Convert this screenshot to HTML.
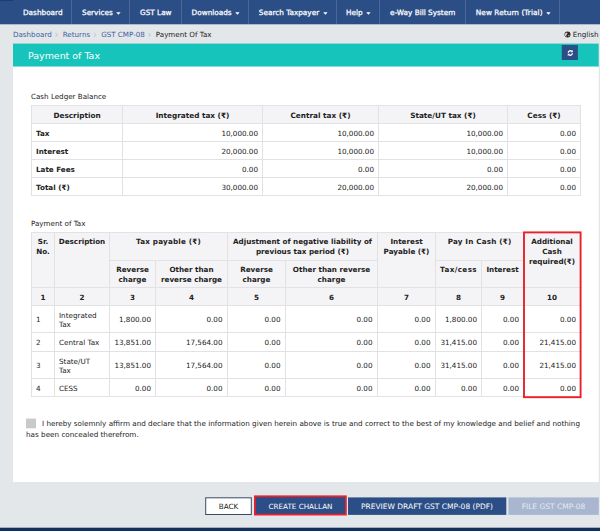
<!DOCTYPE html>
<html lang="en">
<head>
<meta charset="utf-8">
<title>Payment of Tax</title>
<style>
*{box-sizing:border-box;margin:0;padding:0}
html,body{width:602px;height:531px;overflow:hidden;background:#fff}
body{position:relative;font-family:"DejaVu Sans","Liberation Sans",sans-serif;font-size:7.2px;color:#222;line-height:1.2}
#bg{position:absolute;left:0;top:0}
#nav{position:absolute;left:0;top:0;width:600px;height:24px}
#nav .it{position:absolute;top:0;height:24px;line-height:26px;color:#fff;font-size:7.3px;font-weight:normal;white-space:nowrap;-webkit-text-stroke:0.25px #fff}
#nav .dv{position:absolute;top:0;width:1px;height:24px;background:#4a6798}
.caret{display:inline-block;vertical-align:middle;margin-left:3.6px;position:relative;top:0.3px}
#crumb{position:absolute;left:13px;top:24px;height:20px;line-height:22.5px;white-space:nowrap;font-size:7.15px}
#crumb a{color:#3a5f9e;text-decoration:none}
#crumb .sep{color:#bcc2c9;padding:0 4.2px 0 2.8px;font-size:10px;line-height:10px;position:relative;top:0.8px}
#lang{position:absolute;right:3.5px;top:24px;height:20px;line-height:22.5px;font-size:7.15px;white-space:nowrap}
#teal{position:absolute;left:13px;top:44px;width:586px;height:23px}
#teal h1{position:absolute;left:15px;top:0;line-height:23px;font-size:9.45px;font-weight:normal;color:#fff}
#refresh{position:absolute;left:549px;top:1px;width:16px;height:15px}
.lbl{position:absolute;left:31px;font-size:7.15px;white-space:nowrap}
table{position:absolute;left:31px;border-collapse:collapse;table-layout:fixed;font-size:7.2px}
td,th{border:1px solid #e2e2e4;padding:0 4px;vertical-align:middle;overflow:hidden}
th{background:#f4f4f6;font-weight:bold;text-align:center}
td.r{text-align:right;padding-right:5px}
td.b{font-weight:bold}
#t1{top:105px;width:549px}
#t1 tr{height:18px}
#t1 td,#t1 th{padding-top:3px}
#t1 td.r{padding-right:4px}
#t1 th{font-size:7.3px}
#t2{top:232px;width:549px}
#t2 th{vertical-align:top;padding:4.2px 2px 0 2px;line-height:9.7px}
#t2 tr.h2 th{padding-top:3.9px}
#t2 tr.h3 th{padding-top:4.7px}
#t2 td{line-height:9.5px;padding-top:1.4px}
#t2 tr.two td:nth-child(2){padding-top:2.8px}
#t2 tr.last td{padding-top:2.6px}
#t2 td.r{padding-right:4.5px}
#t2 td.r:nth-child(n+8){padding-right:4px}
#t2 td.r:nth-child(3){padding-right:4px}
#red{position:absolute;left:0;top:0;pointer-events:none}
#decl{position:absolute;left:26px;top:417.6px;width:565px;line-height:11px;font-size:7.23px;text-indent:16px}
.btn{position:absolute;top:497px;height:18px;line-height:19px;text-align:center;font-size:7.5px;color:#fff;white-space:nowrap}
</style>
</head>
<body>
<svg id="bg" width="602" height="531" viewBox="0 0 602 531">
  <rect x="0" y="0" width="600" height="531" fill="#e4e7ea"/>
  <rect x="0" y="0" width="600" height="24.3" fill="#2c4e86"/>
  <rect x="0" y="0" width="13" height="0.7" fill="#1c3565"/>
  <rect x="13" y="43.6" width="585.7" height="23.1" fill="#17c4bb"/>
  <rect x="13" y="66.7" width="585.7" height="415.3" fill="#ffffff"/>
  <rect x="561.8" y="45" width="16.1" height="15" fill="#2c4e86"/>
  <rect x="26" y="418.6" width="10" height="9.7" fill="#c9c9c9"/>
  <rect x="0" y="527.7" width="600" height="3.3" fill="#14315d"/>
  <rect x="205.7" y="497.8" width="45.6" height="16.7" fill="#ffffff" stroke="#3a4a66" stroke-width="1"/>
  <rect x="255" y="496.6" width="90.8" height="17.8" fill="#2c4e86"/>
  <rect x="254.9" y="496.3" width="91" height="18.3" fill="none" stroke="#e8212a" stroke-width="1.8"/>
  <rect x="348" y="497.4" width="158.3" height="17.5" fill="#2c4e86"/>
  <rect x="508.4" y="497.4" width="90.4" height="17.5" fill="#a9b6cf"/>
</svg>
<div id="nav">
  <div class="it" style="left:23px">Dashboard</div><div class="dv" style="left:71px"></div>
  <div class="it" style="left:82px">Services<svg class="caret" width="5" height="3" viewBox="0 0 5 3"><polygon points="0.2,0.3 4.6,0.3 2.4,2.7" fill="#fff"/></svg></div><div class="dv" style="left:129px"></div>
  <div class="it" style="left:140px">GST Law</div><div class="dv" style="left:181px"></div>
  <div class="it" style="left:191.6px">Downloads<svg class="caret" width="5" height="3" viewBox="0 0 5 3"><polygon points="0.2,0.3 4.6,0.3 2.4,2.7" fill="#fff"/></svg></div><div class="dv" style="left:248px"></div>
  <div class="it" style="left:258.8px">Search Taxpayer<svg class="caret" width="5" height="3" viewBox="0 0 5 3"><polygon points="0.2,0.3 4.6,0.3 2.4,2.7" fill="#fff"/></svg></div><div class="dv" style="left:336px"></div>
  <div class="it" style="left:346px">Help<svg class="caret" width="5" height="3" viewBox="0 0 5 3"><polygon points="0.2,0.3 4.6,0.3 2.4,2.7" fill="#fff"/></svg></div><div class="dv" style="left:379px"></div>
  <div class="it" style="left:390px">e-Way Bill System</div><div class="dv" style="left:465px"></div>
  <div class="it" style="left:475.8px;letter-spacing:0.08px">New Return (Trial)<svg class="caret" width="5" height="3" viewBox="0 0 5 3"><polygon points="0.2,0.3 4.6,0.3 2.4,2.7" fill="#fff"/></svg></div><div class="dv" style="left:559px"></div>
</div>
<div id="crumb"><a>Dashboard</a><span class="sep">›</span><a>Returns</a><span class="sep">›</span><a>GST CMP-08</a><span class="sep">›</span><span>Payment Of Tax</span></div>
<div id="lang"><svg width="7" height="7" viewBox="0 0 10 10" style="vertical-align:-1px;margin-right:2px"><circle cx="5" cy="5" r="4.3" fill="#262626"/><path d="M1.4 4 L3.4 2.2 L5 2.8 L4.6 4.8 L3.2 5.8 L3.8 8.4 L2.2 7.4 L1 5.6 Z M6.2 5.8 L7.9 5.3 L7.5 7.3 L6.4 7.7 Z" fill="#d9d2c4"/></svg>English</div>
<div id="teal"><h1>Payment of Tax</h1>
  <div id="refresh"><svg width="16" height="15" viewBox="0 0 16 15"><g transform="translate(8.3 8) scale(0.88) translate(-8 -7.9)"><path d="M5.7 7.6a2.3 2.3 0 0 1 4-1.5" fill="none" stroke="#fff" stroke-width="1.5"/><path d="M10.3 8.2a2.3 2.3 0 0 1-4 1.5" fill="none" stroke="#fff" stroke-width="1.5"/><path d="M10.9 4.6v2.5h-2.5z M5.1 11.2v-2.5h2.5z" fill="#fff"/></g></svg></div>
</div>

<div class="lbl" style="top:93px">Cash Ledger Balance</div>
<table id="t1">
<colgroup><col style="width:91px"><col style="width:140px"><col style="width:116px"><col style="width:129px"><col style="width:73px"></colgroup>
<tr><th>Description</th><th>Integrated tax (₹)</th><th>Central tax (₹)</th><th>State/UT tax (₹)</th><th>Cess (₹)</th></tr>
<tr><td class="b">Tax</td><td class="r">10,000.00</td><td class="r">10,000.00</td><td class="r">10,000.00</td><td class="r">0.00</td></tr>
<tr><td class="b">Interest</td><td class="r">20,000.00</td><td class="r">10,000.00</td><td class="r">10,000.00</td><td class="r">0.00</td></tr>
<tr><td class="b">Late Fees</td><td class="r">0.00</td><td class="r">0.00</td><td class="r">0.00</td><td class="r">0.00</td></tr>
<tr><td class="b">Total (₹)</td><td class="r">30,000.00</td><td class="r">20,000.00</td><td class="r">20,000.00</td><td class="r">0.00</td></tr>
</table>

<div class="lbl" style="top:220px">Payment of Tax</div>
<table id="t2">
<colgroup><col style="width:23px"><col style="width:55px"><col style="width:46px"><col style="width:72px"><col style="width:58px"><col style="width:92px"><col style="width:58px"><col style="width:46px"><col style="width:42px"><col style="width:57px"></colgroup>
<tr style="height:28px"><th rowspan="2">Sr. No.</th><th rowspan="2">Description</th><th colspan="2" style="letter-spacing:0.2px">Tax payable (₹)</th><th colspan="2">Adjustment of negative liability of previous tax period (₹)</th><th rowspan="2">Interest Payable (₹)</th><th colspan="2" style="letter-spacing:0.2px">Pay In Cash (₹)</th><th rowspan="2">Additional Cash required(₹)</th></tr>
<tr class="h2" style="height:27px"><th>Reverse charge</th><th>Other than reverse charge</th><th>Reverse charge</th><th>Other than reverse charge</th><th style="letter-spacing:0.4px">Tax/cess</th><th>Interest</th></tr>
<tr class="h3" style="height:18px"><th>1</th><th>2</th><th>3</th><th>4</th><th>5</th><th>6</th><th>7</th><th>8</th><th>9</th><th>10</th></tr>
<tr class="two" style="height:27px"><td>1</td><td>Integrated<br>Tax</td><td class="r">1,800.00</td><td class="r">0.00</td><td class="r">0.00</td><td class="r">0.00</td><td class="r">0.00</td><td class="r">1,800.00</td><td class="r">0.00</td><td class="r">0.00</td></tr>
<tr style="height:19px"><td>2</td><td>Central Tax</td><td class="r">13,851.00</td><td class="r">17,564.00</td><td class="r">0.00</td><td class="r">0.00</td><td class="r">0.00</td><td class="r">31,415.00</td><td class="r">0.00</td><td class="r">21,415.00</td></tr>
<tr class="two" style="height:27px"><td>3</td><td>State/UT<br>Tax</td><td class="r">13,851.00</td><td class="r">17,564.00</td><td class="r">0.00</td><td class="r">0.00</td><td class="r">0.00</td><td class="r">31,415.00</td><td class="r">0.00</td><td class="r">21,415.00</td></tr>
<tr class="last" style="height:18px"><td>4</td><td>CESS</td><td class="r">0.00</td><td class="r">0.00</td><td class="r">0.00</td><td class="r">0.00</td><td class="r">0.00</td><td class="r">0.00</td><td class="r">0.00</td><td class="r">0.00</td></tr>
</table>
<svg id="red" width="602" height="531" viewBox="0 0 602 531"><rect x="524" y="232.4" width="56.6" height="164.8" fill="none" stroke="#e8212a" stroke-width="1.9"/></svg>

<div id="decl">I hereby solemnly affirm and declare that the information given herein above is true and correct to the best of my knowledge and belief and nothing has been concealed therefrom.</div>

<div class="btn" style="left:205px;width:47px;color:#222;font-size:7.25px">BACK</div>
<div class="btn" style="left:255px;width:91px;font-size:7.2px">CREATE CHALLAN</div>
<div class="btn" style="left:348px;width:158px">PREVIEW DRAFT GST CMP-08 (PDF)</div>
<div class="btn" style="left:508px;width:91px;color:#e4e9f2">FILE GST CMP-08</div>
</body>
</html>
